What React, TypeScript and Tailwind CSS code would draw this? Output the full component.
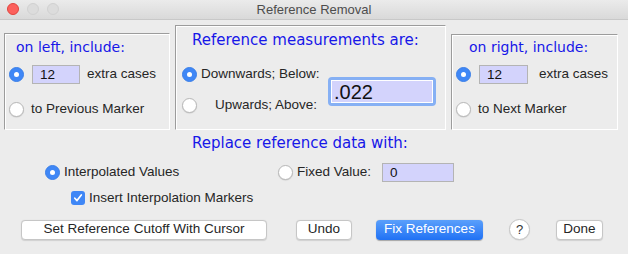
import React from "react";

const body = { fontFamily: '"Liberation Sans", Arial, sans-serif' };
const head = { fontFamily: '"DejaVu Sans", Verdana, sans-serif' };

function Radio({ on }: { on?: boolean }) {
  return on ? (
    <span className="flex h-[15px] w-[15px] shrink-0 items-center justify-center rounded-full border border-[#3a7fe8] bg-[#3f87f6]">
      <span className="h-[5px] w-[5px] rounded-full bg-white" />
    </span>
  ) : (
    <span className="h-[15px] w-[15px] shrink-0 rounded-full border border-[#b8b8b8] bg-white shadow-[0_0.5px_1px_rgba(0,0,0,0.15)]" />
  );
}

function Field({ value, w }: { value: string; w: string }) {
  return (
    <div className={`${w} flex h-[19px] items-end border border-[#b4b4b4] bg-[#d3d3fc] pb-[1px] pl-[7px] text-[13.5px] leading-[15px] text-[#111]`}>
      {value}
    </div>
  );
}

function Button({ children, w, primary }: { children: React.ReactNode; w: string; primary?: boolean }) {
  return primary ? (
    <div className={`${w} flex h-[20px] items-center justify-center rounded-[4px] bg-gradient-to-b from-[#5a9ffb] to-[#1f71f4] text-[13.5px] font-medium text-white shadow-[0_0.5px_1px_rgba(0,0,0,0.3)]`}>
      {children}
    </div>
  ) : (
    <div className={`${w} flex h-[20px] items-center justify-center rounded-[4px] border border-[#c6c6c6] bg-white text-[13.5px] text-[#262626] shadow-[0_0.5px_1px_rgba(0,0,0,0.12)]`}>
      {children}
    </div>
  );
}

const panel =
  "border-t border-l border-[#9c9c9c] border-r-white border-b-white border-r border-b shadow-[inset_1px_1px_0_#fff]";

export default function App() {
  return (
    <div className="h-[254px] w-[628px] overflow-hidden whitespace-nowrap bg-[#ececec] text-[13.5px] text-[#262626]" style={body}>
      <div className="relative flex h-[20px] items-center justify-center border-b border-[#c8c8c8] bg-gradient-to-b from-[#ebebeb] to-[#d9d9d9]">
        <div className="absolute left-[7px] top-[3px] flex gap-[8px]">
          <span className="h-[12px] w-[12px] rounded-full border border-[#e0443e] bg-[#fc605c]" />
          <span className="h-[12px] w-[12px] rounded-full border border-[#d1d1d1] bg-[#dcdcdc]" />
          <span className="h-[12px] w-[12px] rounded-full border border-[#d1d1d1] bg-[#dcdcdc]" />
        </div>
        <span className="text-[13px] text-[#4d4d4d]">Reference Removal</span>
      </div>

      <div className="flex items-end gap-[5px] pl-[4px] pt-[5px]">
        <div className={`${panel} h-[97px] w-[166px] pl-[4px] pt-[4px]`}>
          <div className="h-[18px] pl-[7px] text-[14px] leading-[18px] text-[#1717e8]" style={head}>
            on left, include:
          </div>
          <div className="mt-[8px] flex h-[20px] items-center">
            <Radio on />
            <div className="ml-[8px]">
              <Field value="12" w="w-[48px]" />
            </div>
            <span className="ml-[7px]">extra cases</span>
          </div>
          <div className="mt-[15px] flex h-[20px] items-center">
            <Radio />
            <span className="ml-[7px]">to Previous Marker</span>
          </div>
        </div>

        <div className={`${panel} h-[105px] w-[271px] pl-[6px] pt-[5px]`}>
          <div className="h-[18px] pl-[10px] text-[15px] leading-[18px] text-[#1717e8]" style={head}>
            Reference measurements are:
          </div>
          <div className="flex">
            <div className="mt-[15px] flex flex-col gap-[11px]">
              <div className="flex h-[20px] items-center">
                <Radio on />
                <span className="ml-[4px] w-[116px]">Downwards; Below:</span>
              </div>
              <div className="flex h-[20px] items-center">
                <Radio />
                <span className="ml-[4px] w-[116px] text-right">Upwards; Above:</span>
              </div>
            </div>
            <div className="ml-[11px] mt-[28px] h-[29px] w-[108px] rounded-[4px] bg-[#86b0f4] p-[3px]">
              <div className="flex h-full items-center border border-white bg-[#d3d3fc] pl-[2px] text-[20px] leading-none text-[#111]">
                .022
              </div>
            </div>
          </div>
        </div>

        <div className={`${panel} h-[96px] w-[167px] pl-[4px] pt-[3px]`}>
          <div className="h-[18px] pl-[13px] text-[14px] leading-[18px] text-[#1717e8]" style={head}>
            on right, include:
          </div>
          <div className="mt-[8px] flex h-[20px] items-center">
            <Radio on />
            <div className="ml-[8px]">
              <Field value="12" w="w-[49px]" />
            </div>
            <span className="ml-[11px]">extra cases</span>
          </div>
          <div className="mt-[15px] flex h-[20px] items-center">
            <Radio />
            <span className="ml-[7px]">to Next Marker</span>
          </div>
        </div>
      </div>

      <div className="mt-[4px] h-[18px] pl-[192px] text-[15px] leading-[18px] text-[#1717e8]" style={head}>
        Replace reference data with:
      </div>

      <div className="mt-[10px] flex h-[20px] items-center pl-[45px]">
        <div className="flex w-[233px] items-center">
          <Radio on />
          <span className="ml-[4px]">Interpolated Values</span>
        </div>
        <Radio />
        <span className="ml-[4px]">Fixed Value:</span>
        <div className="ml-[11px]">
          <Field value="0" w="w-[72px]" />
        </div>
      </div>

      <div className="mt-[8px] flex h-[16px] items-center pl-[71px]">
        <span className="flex h-[14px] w-[14px] items-center justify-center rounded-[3px] bg-[#3f87f6]">
          <svg width="10" height="10" viewBox="0 0 10 10">
            <path d="M1.8 5.2 L4 7.6 L8.3 2" fill="none" stroke="white" strokeWidth="1.7" strokeLinecap="round" strokeLinejoin="round" />
          </svg>
        </span>
        <span className="ml-[4px]">Insert Interpolation Markers</span>
      </div>

      <div className="mt-[13px] flex items-center pl-[21px]">
        <Button w="w-[246px]">Set Reference Cutoff With Cursor</Button>
        <div className="ml-[29px]">
          <Button w="w-[56px]">Undo</Button>
        </div>
        <div className="ml-[24px]">
          <Button w="w-[107px]" primary>
            Fix References
          </Button>
        </div>
        <div className="ml-[26px] flex h-[21px] w-[21px] items-center justify-center rounded-full border border-[#c6c6c6] bg-white text-[13px] text-[#333] shadow-[0_0.5px_1px_rgba(0,0,0,0.12)]">
          ?
        </div>
        <div className="ml-[26px]">
          <Button w="w-[47px]">Done</Button>
        </div>
      </div>
    </div>
  );
}
